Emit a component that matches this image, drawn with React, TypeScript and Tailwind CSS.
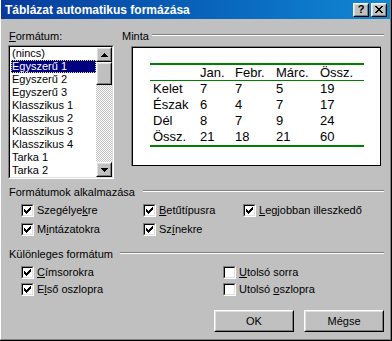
const formats = [
  "(nincs)",
  "Egyszerű 1",
  "Egyszerű 2",
  "Egyszerű 3",
  "Klasszikus 1",
  "Klasszikus 2",
  "Klasszikus 3",
  "Klasszikus 4",
  "Tarka 1",
  "Tarka 2",
];

const rows = [
  ["Kelet", "7", "7", "5", "19"],
  ["Észak", "6", "4", "7", "17"],
  ["Dél", "8", "7", "9", "24"],
  ["Össz.", "21", "18", "21", "60"],
];

function Raised({ className, children }: { className: string; children?: React.ReactNode }) {
  return (
    <div className={`border border-t-white border-l-white border-r-black border-b-black ${className}`}>
      <div className="flex h-full w-full items-center justify-center border border-t-[#dfdfdf] border-l-[#dfdfdf] border-r-[#808080] border-b-[#808080] bg-[#c0c0c0]">
        {children}
      </div>
    </div>
  );
}

function Check({ checked }: { checked: boolean }) {
  return (
    <span className="block h-[13px] w-[13px] shrink-0 border border-t-[#808080] border-l-[#808080] border-r-white border-b-white">
      <span className="flex h-full w-full items-center justify-center border border-t-black border-l-black border-r-[#dfdfdf] border-b-[#dfdfdf] bg-white">
        {checked && (
          <svg width="7" height="7" viewBox="0 0 7 7" shapeRendering="crispEdges">
            <path
              d="M0 2h1v3h-1z M1 3h1v3h-1z M2 4h1v3h-1z M3 3h1v3h-1z M4 2h1v3h-1z M5 1h1v3h-1z M6 0h1v3h-1z"
              fill="#000"
            />
          </svg>
        )}
      </span>
    </span>
  );
}

function CheckRow({ checked, children }: { checked: boolean; children: React.ReactNode }) {
  return (
    <div className="flex h-[13px] items-center">
      <Check checked={checked} />
      <span className="ml-[3px] whitespace-nowrap leading-[13px]">{children}</span>
    </div>
  );
}

function Etched({ className }: { className: string }) {
  return <div className={`h-[2px] flex-1 border-t border-t-[#808080] border-b border-b-white ${className}`} />;
}

function Arrow({ down }: { down?: boolean }) {
  return (
    <svg width="7" height="4" viewBox="0 0 7 4" shapeRendering="crispEdges">
      <path d={down ? "M0 0h7v1h-7z M1 1h5v1h-5z M2 2h3v1h-3z M3 3h1v1h-1z" : "M3 0h1v1h-1z M2 1h3v1h-3z M1 2h5v1h-5z M0 3h7v1h-7z"} fill="#000" />
    </svg>
  );
}

export default function App() {
  return (
    <div className="h-[341px] w-[392px] overflow-hidden border-r border-b border-r-black border-b-black bg-[#c0c0c0] font-['Liberation_Sans',Arial,sans-serif] text-[11px] text-black">
      <div className="flex h-full flex-col border-l border-r border-b border-l-white border-r-[#808080] border-b-[#808080]">
        {/* title bar */}
        <div className="flex h-[19px] shrink-0 items-center bg-linear-to-r from-[#0a3a9c] to-[#1288d4] pl-[4px] pr-[3px]">
          <span className="flex-1 text-[12px] font-bold text-white">Táblázat automatikus formázása</span>
          <Raised className="h-[14px] w-[16px]">
            <span className="text-[11px] font-bold leading-none">?</span>
          </Raised>
          <Raised className="ml-[2px] h-[14px] w-[16px]">
            <svg width="8" height="7" viewBox="0 0 8 7" shapeRendering="crispEdges">
              <path d="M0 0h2l2 2.5 2-2.5h2l-3 3.5 3 3.5h-2l-2-2.5-2 2.5h-2l3-3.5z" fill="#000" />
            </svg>
          </Raised>
        </div>

        <div className="flex flex-col pl-[7px] pr-[6px] pt-[11px]">
          {/* top section */}
          <div className="flex">
            <div className="flex w-[106px] flex-col">
              <div className="ml-[1px] h-[13px] leading-[13px]">
                <u>F</u>ormátum:
              </div>
              <div className="mt-[2px] h-[134px] border border-t-[#808080] border-l-[#808080] border-r-white border-b-white">
                <div className="flex h-full border border-t-black border-l-black border-r-[#dfdfdf] border-b-[#dfdfdf] bg-white">
                  <div className="flex-1">
                    {formats.map((f, i) => (
                      <div
                        key={f}
                        className={`ml-[1px] h-[13px] pl-[1px] leading-[13px] ${
                          i === 1 ? "bg-[#000080] text-white outline-1 -outline-offset-1 outline-dotted outline-[#e6e68a]" : ""
                        }`}
                      >
                        {f}
                      </div>
                    ))}
                  </div>
                  <div className="flex w-[16px] flex-col bg-[repeating-conic-gradient(#c0c0c0_0%_25%,#ffffff_0%_50%)] bg-[length:2px_2px]">
                    <Raised className="h-[15px] w-[16px]">
                      <Arrow />
                    </Raised>
                    <Raised className="h-[23px] w-[16px]" />
                    <div className="flex-1" />
                    <Raised className="h-[15px] w-[16px]">
                      <Arrow down />
                    </Raised>
                  </div>
                </div>
              </div>
            </div>

            <div className="ml-[8px] flex flex-1 flex-col">
              <div className="flex h-[13px] items-center">
                <span className="leading-[13px]">Minta</span>
                <Etched className="mb-[3px] ml-[3px]" />
              </div>
              <div className="ml-[9px] mr-[3px] mt-[3px] h-[120px] border-t border-l border-[#808080]">
                <div className="h-full border border-black bg-white pl-[17px] pt-[15px] text-[13px]">
                  <div className="w-[214px] border-t-2 border-b-2 border-[#008000]">
                    <div className="grid h-[16px] grid-cols-[50px_35px_41px_44px_44px] border-b border-[#008000] leading-[15px]">
                      <span />
                      <span>Jan.</span>
                      <span>Febr.</span>
                      <span>Márc.</span>
                      <span>Össz.</span>
                    </div>
                    {rows.map((r) => (
                      <div key={r[0]} className="grid h-[16px] grid-cols-[50px_35px_41px_44px_44px] leading-[16px]">
                        {r.map((c, j) => (
                          <span key={j} className={j === 0 ? "pl-[3px]" : ""}>
                            {c}
                          </span>
                        ))}
                      </div>
                    ))}
                  </div>
                </div>
              </div>
            </div>
          </div>

          {/* group 1 */}
          <div className="ml-[1px] mt-[7px] flex h-[13px] items-center">
            <span className="leading-[13px]">Formátumok alkalmazása</span>
            <Etched className="mb-[3px] ml-[8px]" />
          </div>
          <div className="mt-[5px] grid grid-cols-[122px_100px_1fr] pl-[13px]">
            <CheckRow checked>
              Szegélye<u>k</u>re
            </CheckRow>
            <CheckRow checked>
              <u>B</u>etűtípusra
            </CheckRow>
            <CheckRow checked>
              <u>L</u>egjobban illeszkedő
            </CheckRow>
          </div>
          <div className="mt-[6px] grid grid-cols-[122px_100px_1fr] pl-[13px]">
            <CheckRow checked>
              M<u>i</u>ntázatokra
            </CheckRow>
            <CheckRow checked>
              Sz<u>í</u>nekre
            </CheckRow>
          </div>

          {/* group 2 */}
          <div className="ml-[1px] mt-[12px] flex h-[13px] items-center">
            <span className="leading-[13px]">Különleges formátum</span>
            <Etched className="mb-[3px] ml-[7px]" />
          </div>
          <div className="mt-[5px] grid grid-cols-[202px_1fr] pl-[13px]">
            <CheckRow checked>
              <u>C</u>ímsorokra
            </CheckRow>
            <CheckRow checked={false}>
              <u>U</u>tolsó sorra
            </CheckRow>
          </div>
          <div className="mt-[4px] grid grid-cols-[202px_1fr] pl-[13px]">
            <CheckRow checked>
              E<u>l</u>ső oszlopra
            </CheckRow>
            <CheckRow checked={false}>
              Utolsó <u>o</u>szlopra
            </CheckRow>
          </div>

          {/* buttons */}
          <div className="mt-[14px] flex justify-end gap-[10px]">
            <Raised className="h-[22px] w-[80px]">
              <span>OK</span>
            </Raised>
            <Raised className="h-[22px] w-[80px]">
              <span>Mégse</span>
            </Raised>
          </div>
        </div>
      </div>
    </div>
  );
}
